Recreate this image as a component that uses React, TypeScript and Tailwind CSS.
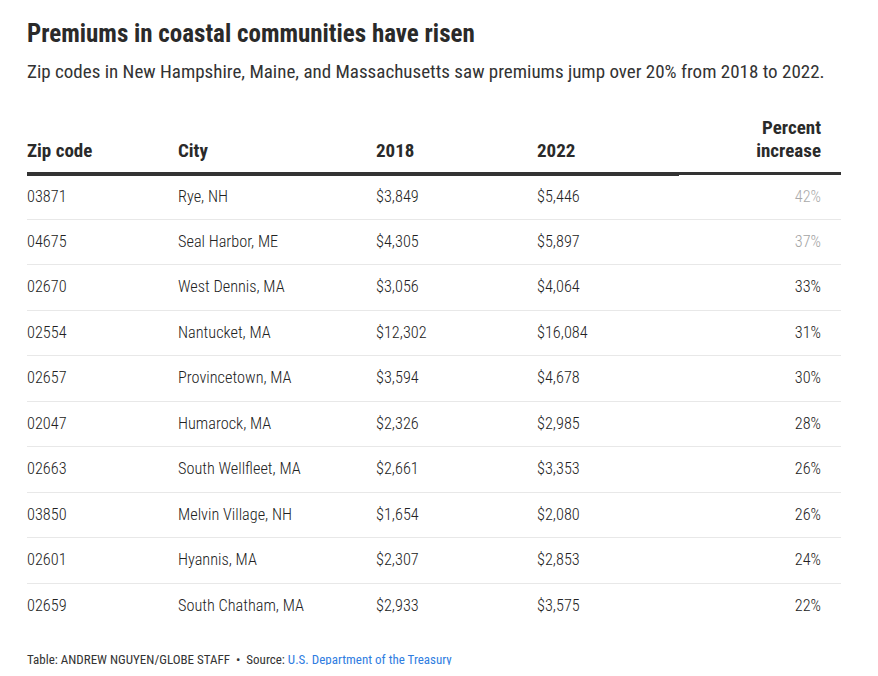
const rows = [
  ["03871", "Rye, NH", "$3,849", "$5,446", "42%"],
  ["04675", "Seal Harbor, ME", "$4,305", "$5,897", "37%"],
  ["02670", "West Dennis, MA", "$3,056", "$4,064", "33%"],
  ["02554", "Nantucket, MA", "$12,302", "$16,084", "31%"],
  ["02657", "Provincetown, MA", "$3,594", "$4,678", "30%"],
  ["02047", "Humarock, MA", "$2,326", "$2,985", "28%"],
  ["02663", "South Wellfleet, MA", "$2,661", "$3,353", "26%"],
  ["03850", "Melvin Village, NH", "$1,654", "$2,080", "26%"],
  ["02601", "Hyannis, MA", "$2,307", "$2,853", "24%"],
  ["02659", "South Chatham, MA", "$2,933", "$3,575", "22%"],
];

const pctColor = (i: number) => (i === 0 ? "text-[#aaaaaa]" : i === 1 ? "text-[#a3a3a3]" : "text-[#222]");

const App = () => {
  return (
    <main
      className="h-[665px] overflow-hidden bg-white text-[#333] pl-[27px] pr-[37px] pt-[19px]"
      style={{ fontFamily: '"Roboto Condensed", "Liberation Sans Narrow", sans-serif' }}
    >
      <h1 className="text-[25px] font-bold leading-[30px] text-[#2a2a2a]">Premiums in coastal communities have risen</h1>
      <p className="mt-[11px] text-[19px] leading-[24px] text-[#333]">
        Zip codes in New Hampshire, Maine, and Massachusetts saw premiums jump over 20% from 2018 to 2022.
      </p>

      <table className="mt-[32px] w-full border-collapse text-left">
        <thead>
          <tr className="text-[19px] font-bold leading-[23px] text-[#2a2a2a] align-bottom">
            <th className="w-[151px] pb-[10px] border-b-4 border-[#333]">Zip code</th>
            <th className="w-[198px] pb-[10px] border-b-4 border-[#333]">City</th>
            <th className="w-[161px] pb-[10px] border-b-4 border-[#333]">2018</th>
            <th className="w-[142px] pb-[10px] border-b-4 border-[#333]">2022</th>
            <th className="pb-[10px] pr-[20px] text-right border-b-[3px] border-[#333]">
              Percent
              <br />
              increase
            </th>
          </tr>
        </thead>
        <tbody>
          {rows.map((r, i) => (
            <tr key={r[0]} className="h-[45.5px] text-[16.3px] font-light text-[#222] border-b border-[#e8e8e8] last:border-b-0">
              <td>{r[0]}</td>
              <td>{r[1]}</td>
              <td>{r[2]}</td>
              <td>{r[3]}</td>
              <td className={`pr-[20px] text-right ${pctColor(i)}`}>{r[4]}</td>
            </tr>
          ))}
        </tbody>
      </table>

      <p className="mt-[23px] text-[13px] leading-[16px] text-[#333]">
        Table: ANDREW NGUYEN/GLOBE STAFF&nbsp; •&nbsp; Source: <span className="text-[#2f7de1]">U.S. Department of the Treasury</span>
      </p>
    </main>
  );
};

export default App;
